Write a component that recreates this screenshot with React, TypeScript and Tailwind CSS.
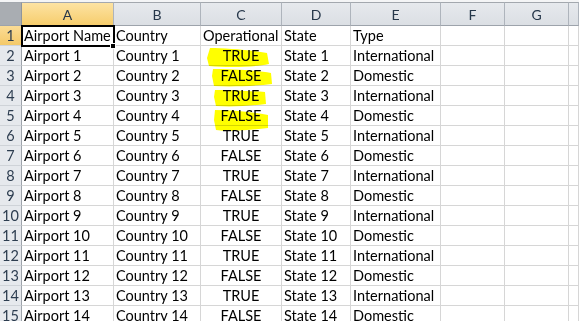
const COLUMNS = ["A", "B", "C", "D", "E", "F", "G", ""]

type Row = { cells: string[] }

const rows: Row[] = [
    { cells: ["Airport Name", "Country", "Operational", "State", "Type"] },
    ...Array.from({ length: 14 }, (_, i) => {
        const n = i + 1
        const odd = n % 2 === 1
        return {
            cells: [
                `Airport ${ n }`,
                `Country ${ n }`,
                odd ? "TRUE" : "FALSE",
                `State ${ n }`,
                odd ? "International" : "Domestic",
            ],
        }
    }),
]

function ColumnHeader({ label, selected }: { label: string; selected?: boolean }) {
    return (
        <div
            className={
                "flex h-[24px] items-center justify-center border-t border-r border-b border-t-[#a3a8ae] border-r-[#aeb4bc] border-b-[#9da3ab] pt-[1px] text-[14px] text-[#26374a] " +
                (selected
                    ? "bg-gradient-to-b from-[#fde3a2] to-[#f6cd6c]"
                    : "bg-gradient-to-b from-[#e6e9ed] to-[#dbdfe4]")
            }>
            { label }
        </div>
    )
}

function RowHeader({ n, selected }: { n: number; selected?: boolean }) {
    return (
        <div
            className={
                "flex h-[20px] items-center justify-center border-r border-b border-r-[#9ea4ab] border-b-[#cfd3d8] pt-[1px] text-[14.5px] leading-none text-[#2d3d50] " +
                (selected ? "bg-gradient-to-b from-[#fbdc95] to-[#f4c968]" : "bg-[#e6e9ed]")
            }>
            { n }
        </div>
    )
}

function Cell({ value, col }: { value?: string; col: number }) {
    const centered = col === 2 && (value === "TRUE" || value === "FALSE")
    return (
        <div
            className={
                "flex h-[20px] items-center overflow-visible whitespace-nowrap border-r border-b border-[#d6d6d6] px-[2px] pt-[1px] text-[14.5px] leading-none text-black " +
                (centered ? "justify-center" : "justify-start")
            }>
            { value }
        </div>
    )
}

function Highlights() {
    return (
        <svg
            className="pointer-events-none absolute top-0 left-0 mix-blend-multiply"
            width={ 579 }
            height={ 321 }
            viewBox="0 0 579 321">
            <g fill="#ffff00">
                <path d="M210 48 C225 48 250 50 267 53 L269 64 C255 67 230 68 209 66 L207 58 Z" />
                <path d="M213 69 C230 69 255 70 271 73 L272 84 C255 86 232 87 214 86 L212 76 Z" />
                <path d="M215 90 C232 90 250 91 265 92 L266 104 C250 106 232 107 216 106 L214 97 Z" />
                <path d="M215 110 C232 110 252 112 268 115 L268 128 C252 130 232 132 216 130 L214 120 Z" />
            </g>
        </svg>
    )
}

export default function App() {
    return (
        <div className="relative h-[321px] w-[579px] overflow-hidden bg-white font-['Lato','Liberation_Sans',sans-serif]">
            <div className="h-[2px] bg-[#f4f5f6]" />
            <div className="relative grid grid-cols-[22px_92px_87px_81px_69px_90px_64px_64px_1fr]">
                <div className="h-[24px] border-t border-r border-b border-t-[#a3a8ae] border-r-[#8f959c] border-b-[#9da3ab] bg-[#a9adb2]" />
                { COLUMNS.map((c, i) => (
                    <ColumnHeader key={ i } label={ c } selected={ c === "A" } />
                )) }

                { rows.map((row, r) => (
                    <div key={ r } className="contents">
                        <RowHeader n={ r + 1 } selected={ r === 0 } />
                        { COLUMNS.map((_, c) => (
                            <Cell key={ c } col={ c } value={ row.cells[c] } />
                        )) }
                    </div>
                )) }

                {/* active cell A1 */ }
                <div className="pointer-events-none absolute top-[23px] left-[21px] h-[22px] w-[94px] border-2 border-black" />
                <div className="pointer-events-none absolute top-[41px] left-[110px] h-[6px] w-[6px] border border-white bg-black" />
            </div>
            <Highlights />
        </div>
    )
}
